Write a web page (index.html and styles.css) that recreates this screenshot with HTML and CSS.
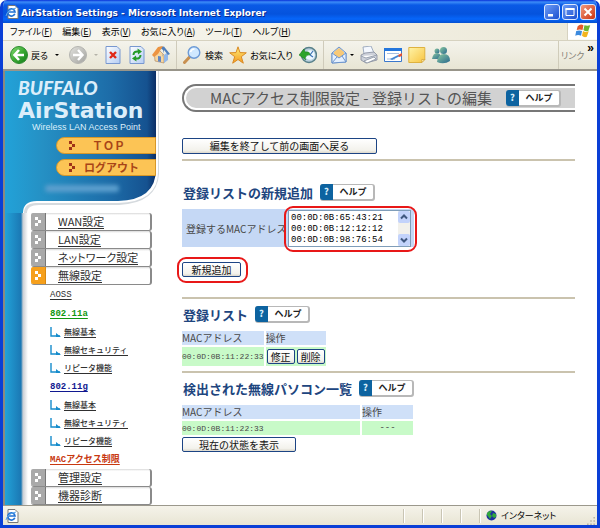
FILE: index.html
```html
<!DOCTYPE html>
<html lang="ja">
<head>
<meta charset="utf-8">
<title>AirStation Settings</title>
<link rel="stylesheet" href="styles.css">
</head>
<body>
<svg width="0" height="0" class="defs" aria-hidden="true">
  <defs>
    <linearGradient id="green" x2="1" y2="1"><stop offset="0" stop-color="#8ade78"/><stop offset=".5" stop-color="#3aaa32"/><stop offset="1" stop-color="#12791a"/></linearGradient>
    <linearGradient id="grey" x2="1" y2="1"><stop offset="0" stop-color="#e2e2de"/><stop offset="1" stop-color="#a2a29e"/></linearGradient>
    <linearGradient id="page" x2="1" y2="1"><stop offset="0" stop-color="#fff"/><stop offset="1" stop-color="#b4cdf4"/></linearGradient>
    <linearGradient id="star" x2="0" y2="1"><stop offset="0" stop-color="#fff07a"/><stop offset="1" stop-color="#f49a20"/></linearGradient>
    <linearGradient id="note" x2="1" y2="1"><stop offset="0" stop-color="#fff4a8"/><stop offset="1" stop-color="#f8c440"/></linearGradient>
    <linearGradient id="people" x2="1" y2="1"><stop offset="0" stop-color="#8cc9a0"/><stop offset="1" stop-color="#28688e"/></linearGradient>
    <linearGradient id="panel" x2="1"><stop offset="0" stop-color="#22a2d8"/><stop offset=".25" stop-color="#2590c4"/><stop offset=".7" stop-color="#1d6ca8"/><stop offset=".94" stop-color="#155290"/><stop offset="1" stop-color="#0c2f66"/></linearGradient>
    <symbol id="ie" viewBox="0 0 14 14"><path d="M3 .5h7l3 3v10H3z" fill="#fff" stroke="#777"/><path d="M9.8 8.8A3.6 3.6 0 1 1 10 7H4" fill="none" stroke="#2272d4" stroke-width="1.7"/><path d="M1 11Q2 5 11 3" fill="none" stroke="#58a6ee"/></symbol>
    <symbol id="dots" viewBox="0 0 8 10"><path d="M1 0h3v3H1zM4 3h3v3H4zM1 6h3v3H1z"/></symbol>
    <symbol id="branch" viewBox="0 0 11 11"><path d="M1 0v9h9" fill="none" stroke="#168ccc" stroke-width="1.4"/><path d="M6 6l5 4H6z" fill="#168ccc"/></symbol>
    <symbol id="up" viewBox="0 0 10 10"><path d="M2 6.5l3-3 3 3" fill="none" stroke="#405880" stroke-width="2"/></symbol>
  </defs>
</svg>
<div class="window">
  <header class="titlebar">
    <svg class="i14"><use href="#ie"/></svg>
    <span class="caption">AirStation Settings - Microsoft Internet Explorer</span>
    <div class="winbtns">
      <button class="wb" aria-label="最小化"><svg viewBox="0 0 14 14"><path d="M3 9h5v2.500H3z" fill="#fff"/></svg></button>
      <button class="wb" aria-label="最大化"><svg viewBox="0 0 14 14"><path d="M3 3.500h8v7H3z" fill="none" stroke="#fff"/><path d="M2.500 3h9v2h-9z" fill="#fff"/></svg></button>
      <button class="wb close" aria-label="閉じる"><svg viewBox="0 0 14 14"><path d="M3.500 3.500l7 7m0-7l-7 7" stroke="#fff" stroke-width="2"/></svg></button>
    </div>
  </header>
  <nav class="menubar">
    <button>ファイル(<u>F</u>)</button><button>編集(<u>E</u>)</button><button>表示(<u>V</u>)</button><button>お気に入り(<u>A</u>)</button><button>ツール(<u>T</u>)</button><button>ヘルプ(<u>H</u>)</button>
    <svg class="flag" viewBox="0 0 30 17"><path fill="#fff" d="M0 0h30v17H0z"/><path d="M10 3q3-3 6-1l-1 5q-3-1-6 0z" fill="#e65a2a"/><path d="M17 2q3 1 6 0l-2 6q-3 1-5-1z" fill="#6cb630"/><path d="M8.500 8q3-1 6 0l-1 5q-3-2-6 0z" fill="#3b8ade"/><path d="M15.500 8q3 2 6 0l-2 6q-3 1-5-1z" fill="#f4b41e"/></svg>
  </nav>
  <div class="toolbar">
    <button class="back"><svg class="i18" viewBox="0 0 18 18"><circle cx="9" cy="9" r="8.500" fill="url(#green)" stroke="#2d8a30"/><path d="M14 9H5m4-5L4.500 9 9 14" fill="none" stroke="#fff" stroke-width="2.600"/></svg>戻る<i class="caret"></i></button>
    <button class="fwd" aria-label="進む"><svg class="i18" viewBox="0 0 18 18"><circle cx="9" cy="9" r="8.500" fill="url(#grey)" stroke="#b4b4b0"/><path d="M4 9h9M9 4l4.500 5L9 14" fill="none" stroke="#fff" stroke-width="2.400"/></svg><i class="caret dim"></i></button>
    <button aria-label="中止"><svg class="i18" viewBox="0 0 18 18"><path d="M2 .5h11l3 3v14H2z" fill="url(#page)" stroke="#7898d0"/><path d="M6 6l6 6m0-6l-6 6" stroke="#e02818" stroke-width="2.400"/></svg></button>
    <button aria-label="更新"><svg class="i18" viewBox="0 0 18 18"><path d="M2 .5h11l3 3v14H2z" fill="url(#page)" stroke="#7898d0"/><path d="M5.500 9q0-4 5-3.500M12.500 9q0 4-5 3.500" fill="none" stroke="#249a28" stroke-width="2"/><path d="M9.500 2.500L14 5.500 10 8.500zM8.500 15.500L4 12.500 8 9.500z" fill="#249a28"/></svg></button>
    <button class="home" aria-label="ホーム"><svg class="i18" viewBox="0 0 18 18"><path d="M2.500 9L7 4l5 5v8l-9-2z" fill="#f6d6a0" stroke="#a6805c" stroke-width=".6"/><path d="M12 9l4-3v8l-4 3z" fill="#92b8ea"/><path d="M11 9V4l-4-3 5-.5L18 8l-2 1-4-5-2 7z" fill="#4f7fbc"/><path d="M0 9l6-8 5-1-5 8-4 3z" fill="#ec9442"/><path d="M6 10l3 .5V16l-3-.6z" fill="#5f86c4"/></svg></button>
    <button class="search"><svg class="i18" viewBox="0 0 18 18"><path d="M1.500 16.500L7.500 10" stroke="#c89050" stroke-width="3" stroke-linecap="round"/><circle cx="11" cy="6.500" r="5.800" fill="#cfe8ff" stroke="#6c9ad6" stroke-width="1.400"/><path d="M7.500 6q1-3 4-3" fill="none" stroke="#fff" stroke-width="1.600"/></svg>検索</button>
    <button class="fav"><svg class="i18" viewBox="0 0 18 18"><path d="M9 .8l2 5.800 6.300.2-5 3.900 2 6.500L9 13.500l-5.300 3.700 2-6.500-5-3.900 6.300-.2z" fill="url(#star)" stroke="#d98a24"/></svg>お気に入り</button>
    <button class="history" aria-label="履歴"><svg class="i18" viewBox="0 0 18 18"><circle cx="10" cy="9" r="7.500" fill="#b9d0de" stroke="#58808a" stroke-width="1.500"/><circle cx="11" cy="9" r="4.800" fill="#eef8ff"/><path d="M11 9l3-4m-3 4l3 2" stroke="#3c72b8" stroke-width="1.200"/><path d="M0 9l5-6 1 3q5-1 5 3-3-1-5 3l1 2z" fill="#2da42b" stroke="#167a1e" stroke-width=".5"/></svg></button>
    <button class="mail" aria-label="メール"><svg class="i18" viewBox="0 0 18 18"><path d="M2 7l7-6 7 6v9L2 17z" fill="#bdd8f8" stroke="#6d94cc"/><path d="M4 6l5-4 5 4v4l-5 2-5-2z" fill="#f7c978"/><path d="M2 7l7 5 7-5v9L2 17z" fill="#e4f0ff" stroke="#6d94cc"/><path d="M2 17l5-6m9 5l-4-6" stroke="#6d94cc"/></svg><i class="caret"></i></button>
    <button aria-label="印刷"><svg class="i18" viewBox="0 0 18 18"><path d="M4 8L3 1l8-1 3 7z" fill="#f4f8ff" stroke="#8c9cb4" stroke-width=".8"/><path d="M1 9l4-2 9-1 3 3v5l-11 3-5-3z" fill="#cdd1da" stroke="#858c9c" stroke-width=".8"/><path d="M1 10l5 2 11-3M4 15l10-4 2 2-9 4z" fill="#fff" stroke="#8790a0" stroke-width=".8"/></svg></button>
    <button aria-label="編集"><svg class="i18" viewBox="0 0 18 18"><path d="M.5 2.500h17v13H.5z" fill="#fff" stroke="#3b78cc"/><path d="M0 2h18v3H0z" fill="#2476dc"/><path d="M3 7.500h12M3 13h8" stroke="#a7bfe2"/><path d="M6 13l8-4 2 1-8 4z" fill="#4486d2"/><path d="M14 9l4-2v3l-3 1z" fill="#de5238"/></svg></button>
    <button aria-label="ノート"><svg class="i18" viewBox="0 0 18 18"><path d="M.8 1.500h16v12l-3 3h-13z" fill="url(#note)" stroke="#deb240"/><path d="M13.800 16.500v-3h3z" fill="#fff2b0" stroke="#c79428" stroke-width=".6"/></svg></button>
    <button aria-label="Messenger"><svg class="i18" viewBox="0 0 18 18"><circle cx="5" cy="5" r="2.500" fill="url(#people)"/><path d="M0 13q1-6 5-6t4 6z" fill="url(#people)"/><circle cx="11.500" cy="4.500" r="3.500" fill="url(#people)"/><path d="M5 16q1-8 7-8t6 7q-6 4-13 1z" fill="url(#people)"/></svg></button>
    <div class="links"><span>リンク</span><b>»</b></div>
  </div>
  <div class="content">
    <aside class="sidebar">
      <div class="brand">
        <svg class="shape" viewBox="0 0 158 142" aria-hidden="true"><path d="M19 142q0-10 12-10h82q40-1 40-31V0h1v103q-2 29-40 31H34q-12 0-12 8z" fill="#d5dade"/><path d="M0 0h151v98q0 31-38 32H32q-14 0-14 12H0z" fill="url(#panel)"/></svg>
        <div class="buffalo">BUFFALO</div>
        <div class="airstation">AirStation</div>
        <div class="tagline">Wireless LAN Access Point</div>
        <a class="pill" href="#"><svg><use href="#dots"/></svg><span class="wide">ＴＯＰ</span></a>
        <a class="pill" href="#"><svg><use href="#dots"/></svg><span>ログアウト</span></a>
        <div class="smudge"></div>
      </div>
      <nav class="tree">
        <a class="tab" href="#"><i><svg><use href="#dots"/></svg></i><span>WAN設定</span></a>
        <a class="tab" href="#"><i><svg><use href="#dots"/></svg></i><span>LAN設定</span></a>
        <a class="tab" href="#"><i><svg><use href="#dots"/></svg></i><span>ネットワーク設定</span></a>
        <a class="tab on" href="#"><i><svg><use href="#dots"/></svg></i><span>無線設定</span></a>
        <a class="sec" href="#">AOSS</a>
        <a class="sec bold green" href="#">802.11a</a>
        <a class="leaf" href="#"><svg><use href="#branch"/></svg><span>無線基本</span></a>
        <a class="leaf" href="#"><svg><use href="#branch"/></svg><span>無線セキュリティ</span></a>
        <a class="leaf" href="#"><svg><use href="#branch"/></svg><span>リピータ機能</span></a>
        <a class="sec bold navy" href="#">802.11g</a>
        <a class="leaf" href="#"><svg><use href="#branch"/></svg><span>無線基本</span></a>
        <a class="leaf" href="#"><svg><use href="#branch"/></svg><span>無線セキュリティ</span></a>
        <a class="leaf" href="#"><svg><use href="#branch"/></svg><span>リピータ機能</span></a>
        <a class="sec bold red" href="#">MACアクセス制限</a>
        <a class="tab" href="#"><i><svg><use href="#dots"/></svg></i><span>管理設定</span></a>
        <a class="tab" href="#"><i><svg><use href="#dots"/></svg></i><span>機器診断</span></a>
      </nav>
    </aside>
    <main>
      <div class="pagetitle"><div class="inner"><h1>MACアクセス制限設定 - 登録リストの編集</h1><button class="help"><b>?</b><span>ヘルプ</span></button></div></div>
      <button class="btn finish">編集を終了して前の画面へ戻る</button>
      <section class="add">
        <div class="head"><h2>登録リストの新規追加</h2><button class="help"><b>?</b><span>ヘルプ</span></button></div>
        <div class="field">
          <label for="mac">登録するMACアドレス</label>
          <div class="marked area">
            <textarea id="mac" spellcheck="false">00:0D:0B:65:43:21
00:0D:0B:12:12:12
00:0D:0B:98:76:54</textarea>
            <div class="scroll"><button aria-label="上へ"><svg><use href="#up"/></svg></button><button class="down" aria-label="下へ"><svg><use href="#up"/></svg></button></div>
          </div>
        </div>
        <div class="marked submit"><button class="btn">新規追加</button></div>
      </section>
      <section class="registered">
        <div class="head"><h2>登録リスト</h2><button class="help"><b>?</b><span>ヘルプ</span></button></div>
        <table>
          <tr><th class="c-mac">MACアドレス</th><th>操作</th></tr>
          <tr><td class="addr">00:0D:0B:11:22:33</td><td class="ops"><div><button class="btn">修正</button><button class="btn">削除</button></div></td></tr>
        </table>
      </section>
      <section class="found">
        <div class="head"><h2>検出された無線パソコン一覧</h2><button class="help"><b>?</b><span>ヘルプ</span></button></div>
        <table>
          <tr><th class="c-wide">MACアドレス</th><th class="c-op">操作</th></tr>
          <tr><td class="addr">00:0D:0B:11:22:33</td><td class="none">---</td></tr>
        </table>
        <button class="btn state">現在の状態を表示</button>
      </section>
    </main>
  </div>
  <footer class="status">
    <svg class="i14"><use href="#ie"/></svg>
    <div class="cells"><i></i><i></i><i></i><i></i><i></i></div>
    <div class="zone"><svg viewBox="0 0 11 11"><circle cx="5.500" cy="5.500" r="5" fill="#1c2f9e"/><path d="M1 3q3-3 5-2L4 4l2 2-2 3-3-4zM7 3l3 1v3L8 8 6 6z" fill="#32a83c"/></svg>インターネット</div>
    <svg class="grip" viewBox="0 0 10 10"><path d="M8 0h2v2H8zM4 4h2v2H4zM8 4h2v2H8zM0 8h2v2H0zM4 8h2v2H4zM8 8h2v2H8z" fill="#b9b5a4"/></svg>
  </footer>
</div>
</body>
</html>
```

FILE: styles.css
```css
* { box-sizing: border-box; }
body { margin: 0; font-family: "Liberation Sans", "Noto Sans CJK JP", sans-serif; background: #fff; }
button { border: 0; padding: 0; margin: 0; background: none; font: inherit; color: inherit; white-space: nowrap; }
a { color: inherit; text-decoration: none; }
svg { display: block; flex: none; }
h1, h2 { margin: 0; white-space: nowrap; }
.defs { position: absolute; }
.i14 { width: 14px; height: 14px; }
.i18 { width: 18px; height: 18px; }

.window { min-height: 100vh; display: flex; flex-direction: column; border: solid #0a3fd6; border-width: 0 3px 3px; border-radius: 7px 7px 0 0; overflow: hidden; background: #ece9d8; }

.titlebar { height: 23px; margin: 0 -3px; padding: 0 4px 0 5px; display: flex; align-items: center; gap: 2px; background: linear-gradient(#0831d9 0, #3c8cf8 2px, #0a5ae6 5px, #0553dd 14px, #0766fa 19px, #0450d0 100%); color: #fff; }
.caption { flex: 1; padding-top: 2px; font: bold 9px "DejaVu Sans", sans-serif; text-shadow: 1px 1px 0 #0a2a8a; white-space: nowrap; }
.winbtns { display: flex; gap: 2px; }
.wb { width: 16px; height: 16px; border: 1px solid #dce8ff; border-radius: 3px; background: linear-gradient(135deg, #6c9cf6, #1c50d0); }
.wb svg { width: 14px; height: 14px; }
.wb.close { background: linear-gradient(135deg, #f29a7c, #cc3210); }

.menubar { height: 18px; padding-left: 7px; display: flex; align-items: center; gap: 10px; border-bottom: 1px solid #d6d2c0; background: linear-gradient(90deg, #f8f7f2, #ece9d8); font: 9px "Noto Sans CJK JP", sans-serif; font-feature-settings: "palt"; }
.flag { width: 30px; height: 17px; margin-left: auto; border-left: 1px solid #d6d2c0; }

.toolbar { height: 30px; padding-left: 7px; display: flex; align-items: center; gap: 6px; border-bottom: 2px solid #98958a; background: linear-gradient(#f4f3ec, #e8e5d4); font: 9px "Noto Sans CJK JP", sans-serif; font-feature-settings: "palt"; white-space: nowrap; }
.toolbar button { display: flex; align-items: center; gap: 3px; }
.caret { border: 2px solid transparent; border-top-color: #000; border-bottom: 0; margin-left: 4px; }
.caret.dim { border-top-color: #b4b2a8; }
.toolbar .search, .toolbar .mail { align-self: stretch; padding-left: 6px; border-left: 1px solid #cfcbbb; }
.toolbar .mail { gap: 0; }
.toolbar .search { gap: 4px; }
.toolbar .mail .caret { margin-left: 2px; }
.toolbar .back { padding-right: 4px; }
.links { margin-left: auto; align-self: stretch; width: 39px; display: flex; justify-content: space-between; align-items: center; padding: 0 3px 0 2px; border-left: 1px solid #d0ccba; color: #858278; }
.links b { align-self: flex-start; color: #000; font: bold 12px "Liberation Sans", sans-serif; }

.content { flex: 1; display: flex; background: #fff; border-left: 2px solid #8c8980; }
.sidebar { flex: none; width: 158px; background: linear-gradient(90deg, #22a2d8 0, #1b78b4 16px, #c9ced4 18px, #fff 23px); }
.brand { position: relative; height: 142px; background: #fff; color: #dceefa; }
.brand > div, .brand > a { position: relative; }
.shape { position: absolute; inset: 0; width: 158px; height: 142px; }
.buffalo { padding: 6px 0 0 13px; font: italic 900 19px/22px Lato, "Liberation Sans", sans-serif; }
.airstation { padding-left: 13px; font: bold 22px/24px "DejaVu Sans", sans-serif; white-space: nowrap; }
.tagline { padding-left: 27px; font-size: 9px; line-height: 9px; white-space: nowrap; }
.pill { display: flex; align-items: center; height: 17px; margin: 5px 7px 0 51px; padding-left: 11px; border-radius: 9px 0 0 9px; border: 1px solid #d89828; background: #fcc455; color: #a84418; font: bold 11px/15px "Noto Sans CJK JP", sans-serif; }
.pill svg { width: 8px; height: 10px; fill: #a03418; }
.pill span { flex: 1; padding-left: 8px; white-space: nowrap; }
.pill .wide { padding-left: 16px; }
.smudge { width: 74px; height: 7px; margin: 9px 0 0 40px; border-radius: 3px; background: #5c9fce; filter: blur(2px); }

.tree { margin-left: 26px; width: 121px; display: flex; flex-direction: column; font-family: "Noto Sans CJK JP", sans-serif; color: #303030; white-space: nowrap; }
.tree a { display: flex; align-items: center; height: 18px; }
.tree span { border-bottom: 1px solid; }
.tab { border: solid #8a8a8a; border-width: 0 2px 1px 0; border-radius: 3px; background: linear-gradient(#d8d8d8, #fff 2px); font-size: 11px; font-feature-settings: "palt"; }
.tab i { align-self: stretch; width: 15px; display: grid; place-items: center; background: #a9a9a9; border-right: 1px solid #777; border-radius: 2px 0 0 2px; }
.tab svg { width: 8px; height: 10px; fill: #fff; }
.tab.on i { background: #f6a01c; border-color: #d88810; }
.tab span { margin-left: 12px; line-height: 13px; }
.tree .sec { padding-left: 19px; margin-top: 1px; font: 9px/10px "Liberation Mono", "Noto Sans CJK JP", monospace; text-decoration: underline; text-underline-offset: 2px; }
.tree .bold { font-weight: bold; }
.green { color: #109810; }
.navy { color: #101890; }
.red { color: #c83810; }
.leaf { padding-left: 19px; gap: 3px; font-size: 8px; font-weight: 500; }
.leaf svg { width: 11px; height: 11px; }
.leaf span { line-height: 10px; }

main { flex: 1; min-width: 0; padding: 13px 22px 0 19px; font-family: "Noto Sans CJK JP", sans-serif; color: #484848; }
.pagetitle { border: solid #777; border-width: 2px 0 2px 2px; border-radius: 14px 0 0 14px; padding: 2px 0 2px 2px; }
.inner { height: 20px; display: flex; align-items: center; gap: 14px; padding-left: 24px; background: #d2d2d2; border-radius: 10px 0 0 10px; }
h1 { font-size: 15px; line-height: 20px; font-weight: 400; color: #555; }
.help { height: 17px; display: flex; flex: none; align-items: stretch; border: solid #b8b8b8; border-width: 1px 2px 2px 0; border-radius: 3px; background: #fff; color: #222; font-size: 9px; line-height: 14px; font-weight: 700; }
.help b { width: 13px; margin: -1px 0 -1px 0; line-height: 15px; border-radius: 3px 0 0 3px; background: #0d63a0; color: #d8ecfa; text-align: center; }
.help span { width: 40px; text-align: center; }
.btn { height: 15px; border: 1px solid #1c4484; border-radius: 2px; background: linear-gradient(#fff, #f3f2ec 80%, #dcd8cc); color: #111; font-size: 10px; line-height: 12px; text-align: center; }
.finish { display: block; width: 195px; height: 16px; margin: 26px 0 5px; }
section { border-top: 2px solid #cac3ae; }
.head { display: flex; align-items: center; gap: 7px; padding-left: 1px; }
h2 { font-size: 13px; line-height: 17px; font-weight: 700; color: #20457e; }
.add { padding-top: 23px; }
.field { width: 232px; margin-top: 8px; display: flex; align-items: center; background: #c5d8f5; font-size: 10px; }
.field label { width: 106px; padding-left: 4px; white-space: nowrap; }
.marked { position: relative; }
.marked::after { content: ""; position: absolute; inset: -5px -7px -6px -5px; border: 2px solid #e81818; border-radius: 9px; pointer-events: none; }
.area { display: flex; width: 123px; height: 37px; margin: 1px 0 0; border: 1px solid #7f9db9; background: #fff; }
textarea { flex: 1; min-width: 0; border: 0; padding: 2px 0 0 2px; resize: none; overflow: hidden; outline: 0; white-space: pre; background: none; color: #000; font: 9px/11px "Liberation Mono", monospace; }
.scroll { width: 12px; display: flex; flex-direction: column; justify-content: space-between; background: #f2f1ec; }
.scroll button { width: 12px; height: 12px; border-radius: 2px; background: #c3d3fb; }
.scroll svg { width: 10px; height: 10px; margin: 1px; }
.down svg { transform: rotate(180deg); }
.submit { width: 59px; margin: 15px 0 20px; display: flex; }
.submit .btn { width: 59px; }
table { border-spacing: 2px; margin: 6px 0 0 -2px; font-size: 10px; line-height: 14px; }
th, td { padding: 0; text-align: left; font-weight: 400; white-space: nowrap; height: 14px; }
th { background: #cfe0f8; }
td { background: #c8fac8; }
.addr { font: 8px/13px "Liberation Mono", monospace; }
.c-mac { width: 79px; }
.registered { padding-top: 7px; }
.ops div { display: flex; gap: 2px; padding: 2px 1px; }
.ops .btn { width: 28px; }
.registered table { margin-bottom: 3px; }
.found { padding-top: 7px; }
.c-wide { width: 178px; }
.c-op { width: 51px; }
.none { text-align: center; font: 9px/13px "Liberation Mono", monospace; }
.state { display: block; width: 114px; }

.status { height: 20px; padding: 0 2px; display: flex; align-items: center; border-top: 1px solid #9b988c; background: linear-gradient(#f5f3ea, #e8e5d4); font: 9px "Noto Sans CJK JP", sans-serif; }
.cells { flex: 1; display: flex; justify-content: flex-end; gap: 17px; }
.cells i { width: 2px; height: 14px; border-left: 1px solid #c9c5b4; background: #fff; }
.zone { width: 106px; padding-left: 5px; display: flex; align-items: center; gap: 4px; font-feature-settings: "palt"; white-space: nowrap; }
.zone svg { width: 11px; height: 11px; }
.grip { width: 8px; height: 8px; align-self: flex-end; }
```
